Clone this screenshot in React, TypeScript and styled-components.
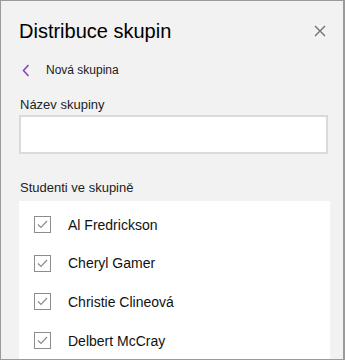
import React from "react";
import styled, { createGlobalStyle } from "styled-components";

const GlobalStyle = createGlobalStyle`
  html, body {
    margin: 0;
    padding: 0;
    background: #f2f2f2;
  }
  * {
    box-sizing: border-box;
  }
`;

const Pane = styled.div`
  width: 345px;
  height: 360px;
  overflow: hidden;
  background: #f2f2f2;
  border: 1px solid #9a9a9a;
  border-right-width: 2px;
  font-family: "Segoe UI", "Liberation Sans", Arial, sans-serif;
  color: #1a1a1a;
  display: flex;
  flex-direction: column;
  padding: 0 15px 0 18px;
`;

const Header = styled.div`
  display: flex;
  align-items: center;
  justify-content: space-between;
  height: 60px;
  padding-top: 1px;
`;

const Title = styled.h1`
  margin: 0;
  font-size: 20px;
  font-weight: 400;
  color: #000;
`;

const CloseButton = styled.button`
  border: none;
  background: none;
  padding: 0;
  width: 14px;
  height: 14px;
  display: flex;
  cursor: pointer;
`;

const BackRow = styled.div`
  display: flex;
  align-items: center;
  gap: 16px;
  height: 18px;
  padding-left: 3px;
  font-size: 12px;
  color: #1a1a1a;
`;

const Label = styled.div<{ $top: number }>`
  margin-top: ${(p) => p.$top}px;
  padding-left: 1px;
  font-size: 13px;
  color: #222;
`;

const NameInput = styled.input`
  margin-top: 3px;
  width: 309px;
  height: 39px;
  border: 2px solid #dadada;
  background: #fff;
  outline: none;
`;

const StudentList = styled.div`
  margin-top: 6px;
  width: 311px;
  flex: 1;
  background: #fff;
  display: flex;
  flex-direction: column;
  padding: 15px 0 0 15px;
  gap: 21.7px;
`;

const StudentRow = styled.label`
  display: flex;
  align-items: center;
  gap: 17px;
  height: 17px;
  font-size: 14px;
  color: #111;
`;

const Box = styled.span`
  width: 17px;
  height: 17px;
  border: 1.5px solid #8c8c8c;
  display: flex;
  align-items: center;
  justify-content: center;
`;

const students = ["Al Fredrickson", "Cheryl Gamer", "Christie Clineová", "Delbert McCray"];

export default function App() {
  return (
    <>
      <GlobalStyle />
      <Pane>
        <Header>
          <Title>Distribuce skupin</Title>
          <CloseButton aria-label="Zavřít">
            <svg width="12" height="12" viewBox="0 0 12 12">
              <path d="M1 1L11 11M11 1L1 11" stroke="#6e6e6e" strokeWidth="1.3" />
            </svg>
          </CloseButton>
        </Header>
        <BackRow>
          <svg width="8" height="13" viewBox="0 0 8 13">
            <path d="M6.5 1L1.5 6.5L6.5 12" fill="none" stroke="#8a43c2" strokeWidth="1.6" />
          </svg>
          Nová skupina
        </BackRow>
        <Label $top={18}>Název skupiny</Label>
        <NameInput />
        <Label $top={26}>Studenti ve skupině</Label>
        <StudentList>
          {students.map((s) => (
            <StudentRow key={s}>
              <Box>
                <svg width="11" height="9" viewBox="0 0 11 9">
                  <path d="M1 4.5L4 7.5L10 1" fill="none" stroke="#8c8c8c" strokeWidth="1.2" />
                </svg>
              </Box>
              {s}
            </StudentRow>
          ))}
        </StudentList>
      </Pane>
    </>
  );
}
